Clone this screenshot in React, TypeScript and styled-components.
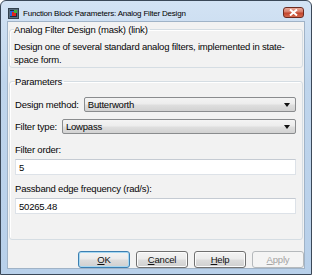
import styled, { createGlobalStyle } from 'styled-components';

const GlobalStyle = createGlobalStyle`
  html, body {
    margin: 0;
    padding: 0;
    background: #ffffff;
  }
  * {
    box-sizing: border-box;
  }
`;

const App = (): JSX.Element => {
  return (
    <>
      <GlobalStyle />
      <Window>
        <TitleBar>
          <TitleIcon>
            <svg width="11" height="11" viewBox="0 0 11 11">
              <rect x="0.5" y="0.5" width="10" height="10" fill="#5b6e7e" stroke="#33414d" />
              <rect x="2" y="2" width="7" height="7" fill="#1c2a44" />
              <rect x="2" y="3" width="4" height="5" fill="#2f64d8" />
              <rect x="4" y="4" width="4" height="4" fill="#e0241c" />
              <rect x="6" y="2" width="3" height="3" fill="#3fb13a" />
            </svg>
          </TitleIcon>
          <TitleText>Function Block Parameters: Analog Filter Design</TitleText>
          <CloseButton aria-label="Close">
            <svg width="9" height="7" viewBox="0 0 9 7">
              <path d="M1 0.5 L8 6.5 M8 0.5 L1 6.5" stroke="#ffffff" strokeWidth="2" />
            </svg>
          </CloseButton>
        </TitleBar>
        <Client>
          <DescGroup>
            <Legend>Analog Filter Design (mask) (link)</Legend>
            <Description>
              Design one of several standard analog filters, implemented in state-space form.
            </Description>
          </DescGroup>
          <ParamGroup>
            <Legend>Parameters</Legend>
            <Row>
              <Label>Design method:</Label>
              <Select>
                <span>Butterworth</span>
                <Arrow />
              </Select>
            </Row>
            <Row $top={7}>
              <Label>Filter type:</Label>
              <Select>
                <span>Lowpass</span>
                <Arrow />
              </Select>
            </Row>
            <FieldLabel $top={9}>Filter order:</FieldLabel>
            <TextInput>5</TextInput>
            <FieldLabel $top={7}>Passband edge frequency (rad/s):</FieldLabel>
            <TextInput>50265.48</TextInput>
          </ParamGroup>
          <ButtonBar>
            <DialogButton $focused>
              <u>O</u>K
            </DialogButton>
            <DialogButton>
              <u>C</u>ancel
            </DialogButton>
            <DialogButton>
              <u>H</u>elp
            </DialogButton>
            <DialogButton $disabled>
              <u>A</u>pply
            </DialogButton>
          </ButtonBar>
        </Client>
      </Window>
    </>
  );
};

export default App;

const Window = styled.div`
  width: 312px;
  height: 275px;
  display: flex;
  flex-direction: column;
  border: 1px solid #3b4858;
  border-radius: 6px 6px 0 0;
  padding: 0 6px 5px 6px;
  background: linear-gradient(to bottom, #d3e3f4 0%, #bfd5ec 30%, #b8d0ea 100%);
  font-family: 'Liberation Sans', Arial, sans-serif;
  font-size: 9.5px;
  color: #050505;
`;

const TitleBar = styled.div`
  height: 20px;
  display: flex;
  align-items: center;
  padding-top: 5px;
`;

const TitleIcon = styled.div`
  width: 11px;
  height: 11px;
  margin-left: 1px;
  display: flex;
`;

const TitleText = styled.div`
  flex: 1;
  margin-left: 4px;
  font-size: 8px;
  letter-spacing: -0.2px;
  color: #000000;
`;

const CloseButton = styled.div`
  align-self: flex-start;
  margin-top: 1px;
  margin-right: 1px;
  width: 21px;
  height: 11px;
  border: 1px solid #6d2a1f;
  border-radius: 3px;
  background: linear-gradient(to bottom, #e9a99a 0%, #d77a66 45%, #c2432b 55%, #d46a4f 100%);
  display: flex;
  align-items: center;
  justify-content: center;
`;

const Client = styled.div`
  flex: 1;
  display: flex;
  flex-direction: column;
  border: 1px solid #a0b3c7;
  background: #f2f2f2;
  padding: 1px 1px 0 1px;
`;

const Group = styled.fieldset`
  margin: 0;
  border: 1px solid #d5dde3;
  border-radius: 3px;
  box-shadow: inset 1px 1px 0 #ffffff;
  min-width: 0;
`;

const DescGroup = styled(Group)`
  padding: 4px 4px 1px 4px;
`;

const ParamGroup = styled(Group)`
  margin-top: 7px;
  padding: 9px 6px 25px 5px;
`;

const Legend = styled.legend`
  padding: 0 2px 0 0;
  line-height: 13px;
  letter-spacing: -0.2px;
`;

const Description = styled.div`
  line-height: 13px;
  letter-spacing: -0.2px;
  padding-right: 10px;
`;

const Row = styled.div<{ $top?: number }>`
  display: flex;
  align-items: center;
  gap: 5px;
  margin-top: ${(p) => p.$top ?? 0}px;
  letter-spacing: -0.2px;
`;

const Label = styled.span`
  white-space: nowrap;
`;

const Select = styled.div`
  flex: 1;
  height: 15px;
  display: flex;
  align-items: center;
  justify-content: space-between;
  padding: 0 5px 0 3px;
  border: 1px solid #8a8c8e;
  border-radius: 2px;
  background: linear-gradient(to bottom, #f4f4f4 0%, #ececec 48%, #dfdfdf 52%, #d2d2d2 100%);
`;

const Arrow = styled.span`
  width: 0;
  height: 0;
  border-left: 3px solid transparent;
  border-right: 3px solid transparent;
  border-top: 4px solid #111111;
`;

const FieldLabel = styled.div<{ $top?: number }>`
  margin-top: ${(p) => p.$top ?? 0}px;
  line-height: 13px;
  letter-spacing: -0.2px;
`;

const TextInput = styled.div`
  margin-top: 3px;
  height: 16px;
  display: flex;
  align-items: center;
  padding: 0 3px;
  background: #ffffff;
  border: 1px solid #dde2e8;
  border-top-color: #c5cbd3;
  letter-spacing: -0.2px;
`;

const ButtonBar = styled.div`
  margin-top: auto;
  margin-right: -1px;
  display: flex;
  justify-content: flex-end;
  gap: 6px;
`;

const DialogButton = styled.div<{ $focused?: boolean; $disabled?: boolean }>`
  width: 52px;
  height: 17px;
  display: flex;
  align-items: center;
  justify-content: center;
  border-radius: 3px;
  letter-spacing: -0.2px;
  border: 1px solid
    ${(p) => (p.$focused ? '#3c7fb1' : p.$disabled ? '#b5b9bc' : '#707070')};
  color: ${(p) => (p.$disabled ? '#a3a3a3' : '#111111')};
  background: ${(p) =>
    p.$disabled
      ? '#f4f4f4'
      : 'linear-gradient(to bottom, #f3f3f3 0%, #ebebeb 48%, #dddddd 52%, #cfcfcf 100%)'};
  box-shadow: ${(p) =>
    p.$focused ? 'inset 0 0 0 1px #a6d8f2' : p.$disabled ? 'none' : 'inset 0 0 0 1px #fbfbfb'};
`;
